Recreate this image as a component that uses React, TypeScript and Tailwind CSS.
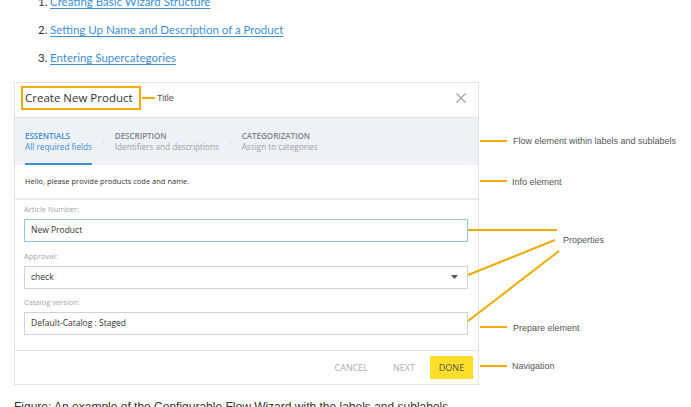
import React from "react";

const links = [
  "Creating Basic Wizard Structure",
  "Setting Up Name and Description of a Product",
  "Entering Supercategories",
];

const steps = [
  { label: "ESSENTIALS", sub: "All required fields", active: true },
  { label: "DESCRIPTION", sub: "Identifiers and descriptions", active: false },
  { label: "CATEGORIZATION", sub: "Assign to categories", active: false },
];

const Field = ({ label, value, focus, select }: { label: string; value: string; focus?: boolean; select?: boolean }) => (
  <div className="flex flex-col">
    <div className="h-[12px] text-[7.5px] leading-[12px] text-[#a3a3a3]">{label}</div>
    <div
      className={`mt-[4px] flex h-[23px] w-[444px] items-center justify-between px-[6px] text-[8.5px] text-[#333] ${
        focus ? "border border-[#8ec5ef]" : "border border-[#d2d2d2]"
      }`}
    >
      <span>{value}</span>
      {select && (
        <svg width="7" height="4" viewBox="0 0 7 4" className="mr-[3px]">
          <path d="M0 0 L7 0 L3.5 4 Z" fill="#555" />
        </svg>
      )}
    </div>
  </div>
);

const Callouts = () => (
  <svg className="pointer-events-none absolute left-0 top-0" width="691" height="407">
    <g stroke="#f0ab00" strokeWidth="2" fill="none">
      <line x1="142" y1="98" x2="155" y2="98" />
      <line x1="480" y1="141" x2="507" y2="141" />
      <line x1="480" y1="181" x2="507" y2="181" />
      <line x1="468" y1="230" x2="557" y2="230" />
      <line x1="468" y1="275" x2="555" y2="240" />
      <line x1="468" y1="321" x2="559" y2="251" />
      <line x1="480" y1="327" x2="507" y2="327" />
      <line x1="480" y1="366" x2="507" y2="366" />
    </g>
  </svg>
);

const Note = ({ x, y, children }: { x: number; y: number; children: React.ReactNode }) => (
  <div
    className="absolute whitespace-nowrap text-[9px] leading-[12px] text-[#555] font-['Liberation_Sans',Arial,sans-serif]"
    style={{ left: x, top: y - 6 }}
  >
    {children}
  </div>
);

export default function App() {
  return (
    <div className="relative h-[407px] w-[691px] overflow-hidden bg-white font-['Lato',sans-serif]">
      {/* links */}
      <ol className="-mt-[12px] flex flex-col pl-[38px]">
        {links.map((t, i) => (
          <li key={t} className="flex h-[28px] items-center text-[11.5px] text-[#333]">
            <span className="w-[12px]">{i + 1}.</span>
            <span className="text-[#3d8fd8] underline underline-offset-2">{t}</span>
          </li>
        ))}
      </ol>

      {/* dialog */}
      <div className="ml-[14px] mt-[10px] flex h-[303px] w-[465px] flex-col border border-[#e3e3e3] font-['Open_Sans',sans-serif]">
        <div className="flex h-[34px] items-start justify-between pl-[6px] pr-[12px] pt-[3px]">
          <div className="flex h-[24px] items-center border-2 border-[#f0ab00] pl-[2px] pr-[6px] text-[11.5px] text-[#333]">
            Create New Product
          </div>
          <svg width="10" height="10" viewBox="0 0 10 10" className="mt-[7px]">
            <path d="M0.5 0.5 L9.5 9.5 M9.5 0.5 L0.5 9.5" stroke="#9aa0a6" strokeWidth="1.2" />
          </svg>
        </div>

        <div className="flex h-[48px] items-stretch gap-[10.5px] border-t border-[#dfe3e8] bg-[#eef1f5] pl-[10px]">
          {steps.map((s, i) => (
            <React.Fragment key={s.label}>
              {i > 0 && <span className="self-center text-[6px] text-[#b0b6bd]">›</span>}
              <div
                className={`flex flex-col justify-center pt-[1px] ${
                  s.active ? "border-b-2 border-[#3d8fd8]" : "border-b-2 border-transparent"
                }`}
              >
                <div className={`text-[8px] font-semibold leading-[11px] ${s.active ? "text-[#3d8fd8]" : "text-[#7d848b]"}`}>
                  {s.label}
                </div>
                <div className={`text-[8.2px] leading-[12px] ${s.active ? "text-[#3d8fd8]" : "text-[#9ba1a7]"}`}>{s.sub}</div>
              </div>
            </React.Fragment>
          ))}
        </div>

        <div className="flex h-[35px] items-center border-b-2 border-[#ebebeb] pl-[10px] text-[7.5px] text-[#333]">
          Hello, please provide products code and name.
        </div>

        <div className="flex flex-col gap-[7.5px] pl-[9px] pt-[3px]">
          <Field label="Article Number:" value="New Product" focus />
          <Field label="Approval:" value="check" select />
          <Field label="Catalog version:" value="Default-Catalog : Staged" />
        </div>

        <div className="mt-auto flex h-[34px] items-center justify-end border-t border-[#e3e3e3] pr-[5px] text-[9px]">
          <span className="text-[#a3aebb]">CANCEL</span>
          <span className="ml-[25px] text-[#a3aebb]">NEXT</span>
          <span className="ml-[15px] flex h-[23px] w-[43px] items-center justify-center bg-[#fddf2a] text-[#555]">DONE</span>
        </div>
      </div>

      <Callouts />
      <Note x={157} y={98}>Title</Note>
      <Note x={513} y={141}>Flow element within labels and sublabels</Note>
      <Note x={512} y={182}>Info element</Note>
      <Note x={563} y={240}>Properties</Note>
      <Note x={513} y={328}>Prepare element</Note>
      <Note x={512} y={366}>Navigation</Note>

      <div className="ml-[14px] mt-[15px] whitespace-nowrap text-[12px] leading-[14px] text-[#333] font-['Liberation_Sans',Arial,sans-serif]">
        Figure: An example of the Configurable Flow Wizard with the labels and sublabels
      </div>
    </div>
  );
}
